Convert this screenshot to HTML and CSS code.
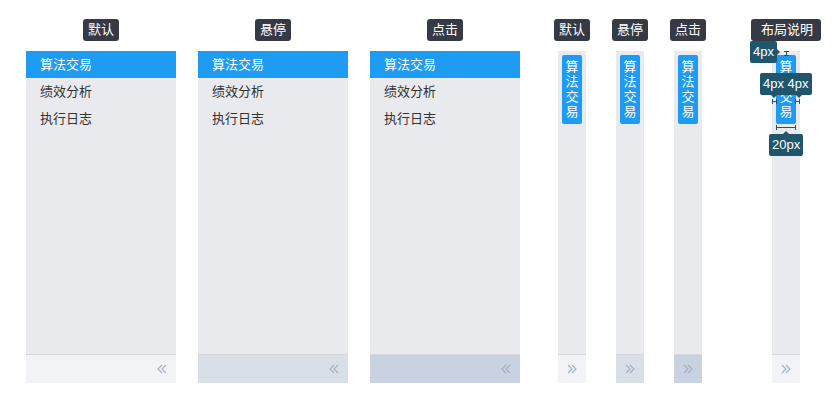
FILE: index.html
```html
<!DOCTYPE html>
<html lang="zh-CN">

<head>
    <meta charset="UTF-8">
    <title>侧边菜单状态</title>
    <link rel="stylesheet" href="styles.css">
</head>

<body>
    <div class="board">
        <!-- expanded menus -->
        <div class="col">
            <span class="tag">默认</span>
            <div class="menu">
                <ul class="menu-list">
                    <li class="menu-item is-active">算法交易</li>
                    <li class="menu-item">绩效分析</li>
                    <li class="menu-item">执行日志</li>
                </ul>
                <div class="menu-foot">
                    <svg class="fold-icon" width="10" height="10" viewBox="0 0 10 10"><path d="M5 1L1 5L5 9M9 1L5 5L9 9"/></svg>
                </div>
            </div>
        </div>
        <div class="col">
            <span class="tag">悬停</span>
            <div class="menu">
                <ul class="menu-list">
                    <li class="menu-item is-active">算法交易</li>
                    <li class="menu-item">绩效分析</li>
                    <li class="menu-item">执行日志</li>
                </ul>
                <div class="menu-foot is-hover">
                    <svg class="fold-icon" width="10" height="10" viewBox="0 0 10 10"><path d="M5 1L1 5L5 9M9 1L5 5L9 9"/></svg>
                </div>
            </div>
        </div>
        <div class="col">
            <span class="tag">点击</span>
            <div class="menu">
                <ul class="menu-list">
                    <li class="menu-item is-active">算法交易</li>
                    <li class="menu-item">绩效分析</li>
                    <li class="menu-item">执行日志</li>
                </ul>
                <div class="menu-foot is-pressed">
                    <svg class="fold-icon" width="10" height="10" viewBox="0 0 10 10"><path d="M5 1L1 5L5 9M9 1L5 5L9 9"/></svg>
                </div>
            </div>
        </div>

        <!-- collapsed menus -->
        <div class="mini-group">
            <div class="col col--mini">
                <span class="tag">默认</span>
                <div class="menu menu--mini">
                    <ul class="menu-list">
                        <li class="menu-item is-active">算法交易</li>
                    </ul>
                    <div class="menu-foot">
                        <svg class="fold-icon" width="10" height="10" viewBox="0 0 10 10"><path d="M1 1L5 5L1 9M5 1L9 5L5 9"/></svg>
                    </div>
                </div>
            </div>
            <div class="col col--mini">
                <span class="tag">悬停</span>
                <div class="menu menu--mini">
                    <ul class="menu-list">
                        <li class="menu-item is-active">算法交易</li>
                    </ul>
                    <div class="menu-foot is-hover">
                        <svg class="fold-icon" width="10" height="10" viewBox="0 0 10 10"><path d="M1 1L5 5L1 9M5 1L9 5L5 9"/></svg>
                    </div>
                </div>
            </div>
            <div class="col col--mini">
                <span class="tag">点击</span>
                <div class="menu menu--mini">
                    <ul class="menu-list">
                        <li class="menu-item is-active">算法交易</li>
                    </ul>
                    <div class="menu-foot is-pressed">
                        <svg class="fold-icon" width="10" height="10" viewBox="0 0 10 10"><path d="M1 1L5 5L1 9M5 1L9 5L5 9"/></svg>
                    </div>
                </div>
            </div>
        </div>

        <!-- layout spec -->
        <div class="col col--mini col-spec">
            <span class="tag tag--wide">布局说明</span>
            <div class="menu menu--mini">
                <ul class="menu-list">
                    <li class="menu-item is-active">算法交易</li>
                </ul>
                <div class="menu-foot">
                    <svg class="fold-icon" width="10" height="10" viewBox="0 0 10 10"><path d="M1 1L5 5L1 9M5 1L9 5L5 9"/></svg>
                </div>

                <span class="gauge gauge--v gauge-top"></span>
                <span class="gauge gauge--h gauge-left"></span>
                <span class="gauge gauge--h gauge-right"></span>
                <span class="gauge gauge--h gauge-width"></span>

                <span class="tip tip-top">4px</span>
                <span class="tip tip-side">4px 4px</span>
                <span class="tip tip-width">20px</span>
            </div>
        </div>
    </div>
</body>

</html>
```

FILE: styles.css
```css
* {
    margin: 0;
    padding: 0;
    box-sizing: border-box;
}

body {
    background: #fff;
    font-family: 'Liberation Sans', 'Noto Sans CJK SC', sans-serif;
    font-size: 13px;
    color: #333;
}

/* Row of samples */
.board {
    display: flex;
    gap: 22px;
    padding: 19px 0 0 26px;
}

.mini-group {
    display: flex;
    gap: 30px;
    margin-left: 16px;
}

.col {
    display: flex;
    flex-direction: column;
    align-items: center;
    gap: 10px;
}

/* collapsed columns are as narrow as the menu, the label hangs over */
.col--mini {
    width: 28px;
}

.col-spec {
    margin-left: 48px;
}

/* State label */
.tag {
    flex: none;
    display: inline-block;
    height: 22px;
    line-height: 22px;
    padding: 0 5px;
    border-radius: 3px;
    background: #353a45;
    color: #fff;
    white-space: nowrap;
}

.tag--wide {
    padding: 0 8px 0 10px;
}

/* Side menu */
.menu {
    position: relative;
    display: flex;
    flex-direction: column;
    width: 150px;
    height: 332px;
    background: #e9eaee;
}

.menu-list {
    flex: 1;
    list-style: none;
}

.menu-item {
    height: 27px;
    line-height: 27px;
    padding-left: 14px;
    color: #333;
}

.menu-item.is-active {
    background: #1e9bf2;
    color: #fff;
}

.menu-foot {
    display: flex;
    align-items: center;
    justify-content: flex-end;
    height: 29px;
    padding-right: 9px;
    border-top: 1px solid #d6d8dc;
    background: #f2f3f7;
}

.menu-foot.is-hover {
    background: #d8dfe7;
}

.menu-foot.is-pressed {
    background: #c8d2e0;
}

.fold-icon path {
    fill: none;
    stroke: #a2b0c4;
    stroke-width: 1.1;
}

/* Collapsed variant */
.menu--mini {
    width: 28px;
}

.menu--mini .menu-list {
    padding: 4px;
}

.menu--mini .menu-item {
    width: 20px;
    height: auto;
    padding: 4px 0 5px;
    line-height: 15px;
    text-align: center;
    border-radius: 2px;
}

.menu--mini .menu-foot {
    justify-content: center;
    padding-right: 0;
}

/* Spec annotations */
.gauge {
    position: absolute;
    border-color: #1f566e;
    border-style: solid;
    border-width: 0;
}

.gauge--v {
    width: 5px;
    border-top-width: 1px;
    border-bottom-width: 1px;
}

.gauge--v::after {
    content: '';
    position: absolute;
    left: 2px;
    top: 0;
    bottom: 0;
    border-left: 1px solid #1f566e;
}

.gauge--h {
    height: 5px;
    border-left-width: 1px;
    border-right-width: 1px;
}

.gauge--h::after {
    content: '';
    position: absolute;
    left: 0;
    right: 0;
    top: 2px;
    border-top: 1px solid #1f566e;
}

.gauge-top {
    left: 12px;
    top: 0;
    height: 5px;
}

.gauge-left {
    left: 0;
    top: 48px;
    width: 5px;
}

.gauge-right {
    left: 23px;
    top: 48px;
    width: 5px;
}

.gauge-width {
    left: 4px;
    top: 74px;
    width: 20px;
}

.tip {
    position: absolute;
    height: 22px;
    line-height: 22px;
    padding: 0 3px;
    border-radius: 2px;
    background: #1f566e;
    color: #fff;
    white-space: nowrap;
}

.tip::before,
.tip::after {
    content: '';
    position: absolute;
    border: 4px solid transparent;
}

.tip-top {
    left: -22px;
    top: -10px;
}

.tip-top::before {
    right: -7px;
    top: 7px;
    border-left-color: #1f566e;
}

.tip-top::after {
    display: none;
}

.tip-side {
    left: -12px;
    top: 22px;
}

.tip-side::before {
    left: 10px;
    bottom: -7px;
    border-top-color: #1f566e;
}

.tip-side::after {
    left: 35px;
    bottom: -7px;
    border-top-color: #1f566e;
}

.tip-width {
    left: -3px;
    top: 83px;
}

.tip-width::before {
    left: 13px;
    top: -7px;
    border-bottom-color: #1f566e;
}

.tip-width::after {
    display: none;
}
```
